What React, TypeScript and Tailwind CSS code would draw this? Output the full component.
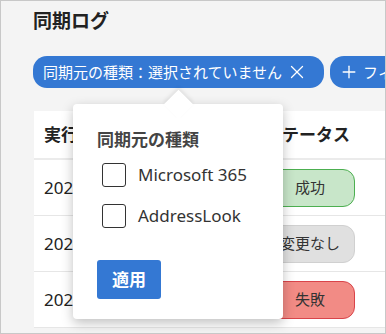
import { Plus, X } from 'lucide-react';

const rows = [
  { date: '2024/05/20 09:00', status: '成功', cls: 'bg-[#c8e6c9] border-[#4caf50]' },
  { date: '2024/05/19 09:00', status: '変更なし', cls: 'bg-[#e0e0e0] border-[#d0d0d0]' },
  { date: '2024/05/18 09:00', status: '失敗', cls: 'bg-[#f28b85] border-[#d9444a]' },
];

export default function App() {
  return (
    <div className="relative h-[334px] w-[386px] overflow-hidden border border-[#c8c8c8] bg-[#f4f4f4] font-['Noto_Sans','Noto_Sans_CJK_JP',sans-serif] text-[#222]">
      <div className="pl-[32px] pt-[8px]">
        <h1 className="text-[19px] font-bold leading-[24px]">同期ログ</h1>

        {/* Filter chips */}
        <div className="mt-[23px] flex gap-[6px] whitespace-nowrap">
          <div className="flex h-[32px] shrink-0 items-center rounded-[14px] bg-[#3478d3] pl-[10px] pr-[16px] text-[15px] text-white">
            <span>同期元の種類：選択されていません</span>
            <X size={22} strokeWidth={1.4} className="ml-[4px]" />
          </div>
          <div className="flex h-[32px] shrink-0 items-center rounded-[14px] bg-[#3478d3] pl-[9px] pr-[12px] text-[15px] text-white">
            <Plus size={20} strokeWidth={1.6} />
            <span className="ml-[4px]">フィルターを追加</span>
          </div>
        </div>

        {/* Table */}
        <div className="mt-[23px] ml-[1px] w-[380px] bg-white">
          <div className="flex h-[49px] items-center border-b-2 border-[#ebebeb] text-[17px] font-bold">
            <div className="w-[231px] pl-[10px]">実行日時</div>
            <div>ステータス</div>
          </div>
          {rows.map((r) => (
            <div key={r.date} className="flex h-[56px] items-center border-b border-[#e6e6e6]">
              <div className="w-[231px] pl-[10px] text-[17px]">{r.date}</div>
              <div className={`flex h-[38px] w-[90px] items-center justify-center rounded-[12px] border text-[15px] text-[#333] ${r.cls}`}>
                {r.status}
              </div>
            </div>
          ))}
        </div>
      </div>

      {/* Popover */}
      <div className="absolute left-[72px] top-[103px] h-[215px] w-[210px] rounded-[4px] bg-white shadow-[0_4px_12px_rgba(0,0,0,0.25)]">
        <div className="absolute left-[95px] top-[-10px] h-[21px] w-[21px] rotate-45 bg-white shadow-[-2px_-2px_4px_rgba(0,0,0,0.08)]" />
        <div className="relative px-[24px] pt-[24px]">
          <div className="text-[17px] font-semibold leading-[24px] text-[#444]">同期元の種類</div>
          <div className="mt-[11px] flex flex-col gap-[17px]">
            {['Microsoft 365', 'AddressLook'].map((label) => (
              <label key={label} className="flex h-[24px] items-center gap-[12px] pl-[5px]">
                <span className="h-[24px] w-[24px] rounded-[3px] border border-[#333]" />
                <span className="text-[17px] text-[#333]">{label}</span>
              </label>
            ))}
          </div>
          <button className="mt-[32px] h-[39px] w-[64px] rounded-[3px] bg-[#3478d3] text-[17px] font-bold text-white">
            適用
          </button>
        </div>
      </div>
    </div>
  );
}
